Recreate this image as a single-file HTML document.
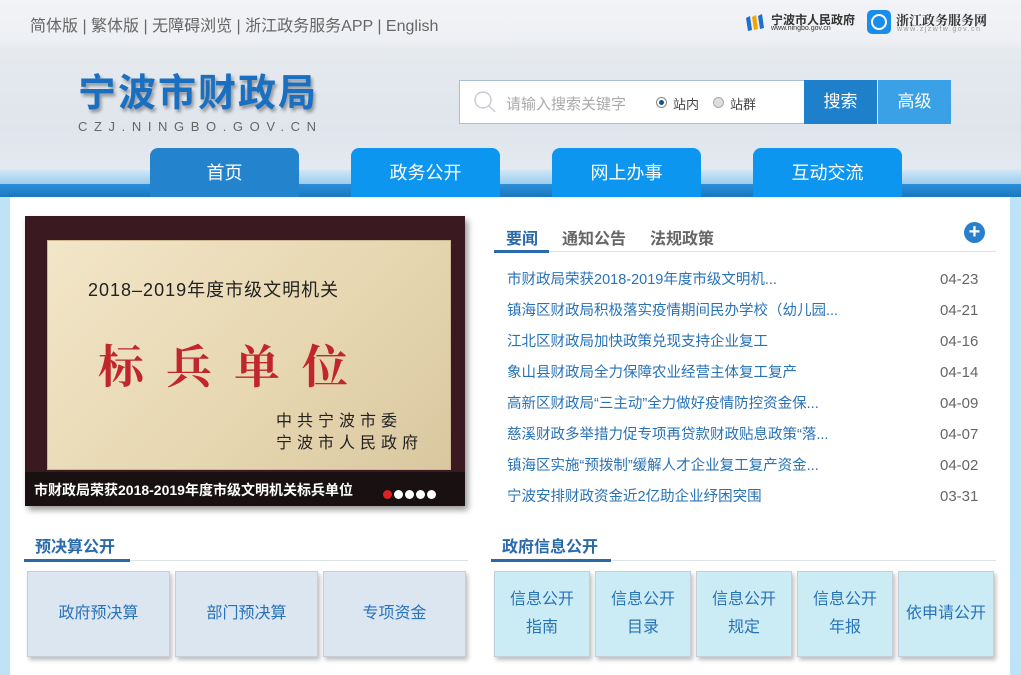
<!DOCTYPE html>
<html><head><meta charset="utf-8"><style>
*{margin:0;padding:0;box-sizing:border-box}
body{width:1021px;height:675px;overflow:hidden;font-family:"Liberation Sans","Noto Sans CJK SC","Microsoft YaHei",sans-serif;background:#bfe3f6;position:relative}
.hdr{position:absolute;left:0;top:0;width:1021px;height:197px;background:linear-gradient(180deg,#f1f3f6 0,#eef0f3 40px,#e6eaef 50px,#dfe5ec 130px,#e3e9ef 165px);}
.top{position:absolute;left:30px;top:12px;font-size:16px;color:#666;}
.abs{position:absolute}
.logo{left:78px;top:62px;font-size:38px;font-weight:bold;color:#1a6fc0;letter-spacing:2px;text-shadow:2px 3px 3px rgba(0,0,0,.35);white-space:nowrap}
.sub{left:78px;top:119px;font-size:13px;color:#666;letter-spacing:6.6px;white-space:nowrap}
.search{left:459px;top:80px;width:346px;height:44px;background:#fff;border:1px solid #a9bfd8}
.btn{top:80px;width:73px;height:44px;color:#fff;font-size:17px;text-align:center;line-height:44px}
.band1{left:0;top:170px;width:1021px;height:14px;background:linear-gradient(180deg,#cfe6f6,#9ccdef)}
.band2{left:0;top:184px;width:1021px;height:13px;background:linear-gradient(180deg,#2a8fd6,#1a78c2)}
.tab{top:148px;width:149px;height:49px;border-radius:8px 8px 0 0;background:#0d96f0;color:#fff;font-size:18px;text-align:center;line-height:50px}
.main{left:10px;top:197px;width:1000px;height:478px;background:#fff}
.news a{display:block;position:absolute;left:507px;font-size:14.5px;line-height:20px;color:#2872b8;white-space:nowrap}
.d{position:absolute;left:940px;font-size:15px;line-height:20px;color:#666}
.box{position:absolute;top:571px;height:86px;border:1px solid #c8ced6;box-shadow:2px 3px 4px rgba(0,0,0,.25);font-size:16px;color:#2872b8;text-align:center;display:flex;align-items:center;justify-content:center;line-height:28px}
.b1{background:#dbe6f1}.b2{background:#ccecf5}
</style></head><body>
<div class="hdr"></div>
<div class="top">简体版 | 繁体版 | 无障碍浏览 | 浙江政务服务APP | English</div>
<div class="abs" style="left:744px;top:12px;width:22px;height:20px">
<svg width="22" height="20"><path d="M2 6l4-2 2 14-4 1z" fill="#1e6fd0"/><path d="M8 5l4-2 2 14-4 1z" fill="#f3a400"/><path d="M14 4l4-2 2 14-4 1z" fill="#1e6fd0"/></svg></div>
<div class="abs" style="left:771px;top:11px;font-size:12px;color:#333;font-weight:bold;white-space:nowrap">宁波市人民政府</div>
<div class="abs" style="left:771px;top:25px;font-size:7px;color:#333">www.ningbo.gov.cn</div>
<div class="abs" style="left:867px;top:10px;width:24px;height:24px;border-radius:5px;background:#1a8cea"><div style="margin:4px;width:16px;height:16px;border:2px solid #fff;border-radius:50%"></div></div>
<div class="abs" style="left:896px;top:10px;font-size:13px;color:#333;font-weight:bold;font-family:'Noto Serif CJK SC',serif;white-space:nowrap">浙江政务服务网</div>
<div class="abs" style="left:897px;top:26px;font-size:7px;color:#999;letter-spacing:1.5px">www.zjzwfw.gov.cn</div>
<div class="abs logo">宁波市财政局</div>
<div class="abs sub">CZJ.NINGBO.GOV.CN</div>
<div class="abs search">
<svg class="abs" style="left:13px;top:9px" width="24" height="24"><circle cx="10" cy="10" r="8" fill="none" stroke="#c8ccd2" stroke-width="1.5"/><path d="M16 16l6 6" stroke="#c8ccd2" stroke-width="1.5"/></svg>
<span class="abs" style="left:46px;top:12px;font-size:15px;color:#aaa;white-space:nowrap">请输入搜索关键字</span>
<span class="abs" style="left:196px;top:16px;width:11px;height:11px;border-radius:50%;background:#fff;border:1px solid #888"><span style="display:block;margin:2px;width:5px;height:5px;border-radius:50%;background:#1a4f80"></span></span>
<span class="abs" style="left:213px;top:13px;font-size:13px;color:#444">站内</span>
<span class="abs" style="left:253px;top:16px;width:11px;height:11px;border-radius:50%;background:#ddd;border:1px solid #aaa"></span>
<span class="abs" style="left:270px;top:13px;font-size:13px;color:#444">站群</span>
</div>
<div class="abs btn" style="left:804px;background:#1e7fca">搜索</div>
<div class="abs btn" style="left:878px;background:#3aa1e6">高级</div>
<div class="abs band1"></div><div class="abs band2"></div>
<div class="abs tab" style="left:150px;background:#2384cd">首页</div>
<div class="abs tab" style="left:351px">政务公开</div>
<div class="abs tab" style="left:552px">网上办事</div>
<div class="abs tab" style="left:753px">互动交流</div>
<div class="abs main"></div>
<div class="abs" style="left:25px;top:216px;width:440px;height:290px;background:#3a1a20;box-shadow:3px 4px 6px rgba(0,0,0,.4)">
<div class="abs" style="left:22px;top:24px;width:404px;height:230px;background:linear-gradient(135deg,#f2e6c8,#e6d6b0 60%,#d9c7a0);border:1px solid #cbb892">
<div class="abs" style="left:40px;top:35px;font-size:18px;color:#222;white-space:nowrap;letter-spacing:1px">2018–2019年度市级文明机关</div>
<div class="abs" style="left:50px;top:90px;font-size:46px;color:#c0262c;font-weight:bold;letter-spacing:22px;white-space:nowrap;font-family:'Noto Serif CJK SC',serif">标兵单位</div>
<div class="abs" style="left:228px;top:170px;font-size:16px;color:#222;letter-spacing:5px;line-height:22px;white-space:nowrap">中共宁波市委<br>宁波市人民政府</div>
</div>
<div class="abs" style="left:0;top:256px;width:440px;height:34px;background:rgba(20,15,15,.85)"></div>
<div class="abs" style="left:9px;top:264px;font-size:14px;color:#fff;font-weight:bold;white-space:nowrap">市财政局荣获2018-2019年度市级文明机关标兵单位</div>
<div class="abs" style="left:358px;top:270px;white-space:nowrap">
<span style="display:inline-block;width:9px;height:9px;border-radius:50%;background:#d22;margin-right:2px"></span><span style="display:inline-block;width:9px;height:9px;border-radius:50%;background:#fff;margin-right:2px"></span><span style="display:inline-block;width:9px;height:9px;border-radius:50%;background:#fff;margin-right:2px"></span><span style="display:inline-block;width:9px;height:9px;border-radius:50%;background:#fff;margin-right:2px"></span><span style="display:inline-block;width:9px;height:9px;border-radius:50%;background:#fff"></span></div>
</div>
<div class="abs" style="left:506px;top:225px;font-size:16px;font-weight:bold;color:#2a6aaa">要闻</div>
<div class="abs" style="left:562px;top:225px;font-size:16px;font-weight:bold;color:#666">通知公告</div>
<div class="abs" style="left:650px;top:225px;font-size:16px;font-weight:bold;color:#666">法规政策</div>
<div class="abs" style="left:964px;top:222px;width:21px;height:21px;border-radius:50%;background:#2a7fcd;color:#fff;font-size:20px;line-height:20px;text-align:center;font-weight:bold">+</div>
<div class="abs" style="left:494px;top:251px;width:502px;height:1px;background:#dde2e8"></div>
<div class="abs" style="left:494px;top:250px;width:55px;height:3px;background:#2a6aaa"></div>
<div class="news">
<a style="top:270px">市财政局荣获2018-2019年度市级文明机...</a><span class="d" style="top:270px">04-23</span>
<a style="top:301px">镇海区财政局积极落实疫情期间民办学校（幼儿园...</a><span class="d" style="top:301px">04-21</span>
<a style="top:332px">江北区财政局加快政策兑现支持企业复工</a><span class="d" style="top:332px">04-16</span>
<a style="top:363px">象山县财政局全力保障农业经营主体复工复产</a><span class="d" style="top:363px">04-14</span>
<a style="top:394px">高新区财政局“三主动”全力做好疫情防控资金保...</a><span class="d" style="top:394px">04-09</span>
<a style="top:425px">慈溪财政多举措力促专项再贷款财政贴息政策“落...</a><span class="d" style="top:425px">04-07</span>
<a style="top:456px">镇海区实施“预拨制”缓解人才企业复工复产资金...</a><span class="d" style="top:456px">04-02</span>
<a style="top:487px">宁波安排财政资金近2亿助企业纾困突围</a><span class="d" style="top:487px">03-31</span>
</div>
<div class="abs" style="left:35px;top:533px;font-size:16px;font-weight:bold;color:#2a6aaa">预决算公开</div>
<div class="abs" style="left:24px;top:560px;width:444px;height:1px;background:#dde2e8"></div>
<div class="abs" style="left:24px;top:559px;width:106px;height:3px;background:#2a6aaa"></div>
<div class="abs" style="left:502px;top:533px;font-size:16px;font-weight:bold;color:#2a6aaa">政府信息公开</div>
<div class="abs" style="left:491px;top:560px;width:505px;height:1px;background:#dde2e8"></div>
<div class="abs" style="left:491px;top:559px;width:120px;height:3px;background:#2a6aaa"></div>
<div class="box b1" style="left:27px;width:143px">政府预决算</div>
<div class="box b1" style="left:175px;width:143px">部门预决算</div>
<div class="box b1" style="left:323px;width:143px">专项资金</div>
<div class="box b2" style="left:494px;width:96px">信息公开<br>指南</div>
<div class="box b2" style="left:595px;width:96px">信息公开<br>目录</div>
<div class="box b2" style="left:696px;width:96px">信息公开<br>规定</div>
<div class="box b2" style="left:797px;width:96px">信息公开<br>年报</div>
<div class="box b2" style="left:898px;width:96px">依申请公开</div>
</body></html>
